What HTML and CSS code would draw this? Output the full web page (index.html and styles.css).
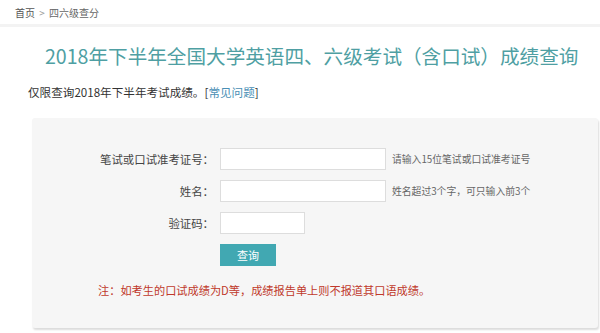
FILE: index.html
```html
<html>
	<head>
		<meta charset="utf-8">
		<title>四六级查分</title>
		<link rel="stylesheet" href="styles.css">
	</head>
	<body>
<div class="crumb"><a href="#">首页</a> <span class="sep">&gt;</span> 四六级查分</div>

<h1>2018年下半年全国大学英语四、六级考试（含口试）成绩查询</h1>
<p class="intro">仅限查询2018年下半年考试成绩。[<a href="#">常见问题</a>]</p>

<div class="panel">
	<form class="form">
		<label>笔试或口试准考证号：</label>
		<input type="text" class="field">
		<span class="hint">请输入15位笔试或口试准考证号</span>

		<label>姓名：</label>
		<input type="text" class="field">
		<span class="hint">姓名超过3个字，可只输入前3个</span>

		<label>验证码：</label>
		<input type="text" class="field short">
		<span class="hint"></span>

		<span></span>
		<button type="button" class="btn">查询</button>
		<span></span>
	</form>
	<p class="note">注：如考生的口试成绩为D等，成绩报告单上则不报道其口语成绩。</p>
</div>
	</body>
</html>
```

FILE: styles.css
```css
BODY {
	margin: 0;
	background: #fff;
	font-family: "Noto Sans CJK SC", "Liberation Sans", sans-serif;
	color: #333;
	}
A { color: inherit; text-decoration: none; }

.crumb {
	height: 27px;
	line-height: 25px;
	padding-left: 15px;
	font-size: 10px;
	color: #666;
	border-bottom: 3px solid #f3f3f3;
	box-sizing: border-box;
	}
.crumb A { color: #555; }
.crumb .sep { color: #999; margin: 0 2px; }

H1 {
	margin: 14px 0 0 45px;
	font-size: 19.6px;
	font-weight: normal;
	line-height: 30px;
	color: #4f9fa3;
	}
.intro {
	margin: 14px 0 0 28px;
	font-size: 11.6px;
	line-height: 14px;
	color: #333;
	}
.intro A { color: #4a8fb5; }

.panel {
	margin: 19px 2px 0 32px;
	height: 210px;
	background: #f6f6f6;
	border-radius: 3px;
	box-shadow: 1px 2px 2px #dcdcdc;
	padding-top: 30px;
	box-sizing: border-box;
	}
.form {
	display: grid;
	grid-template-columns: 182px auto 1fr;
	column-gap: 6px;
	row-gap: 10px;
	align-items: center;
	margin: 0;
	}
.form LABEL {
	text-align: right;
	font-size: 11.4px;
	color: #444;
	}
.field {
	width: 166px;
	height: 22px;
	border: 1px solid #ddd;
	background: #fff;
	box-sizing: border-box;
	margin: 0;
	padding: 0 4px;
	}
.field.short { width: 85px; }
.hint {
	font-size: 9.8px;
	color: #666;
	}
.btn {
	width: 56px;
	height: 22px;
	border: 0;
	background: #41a8b2;
	color: #fff;
	font-family: inherit;
	font-size: 11px;
	padding: 0;
	}
.note {
	margin: 16px 0 0 66px;
	font-size: 11.2px;
	color: #c0392b;
	}
```
